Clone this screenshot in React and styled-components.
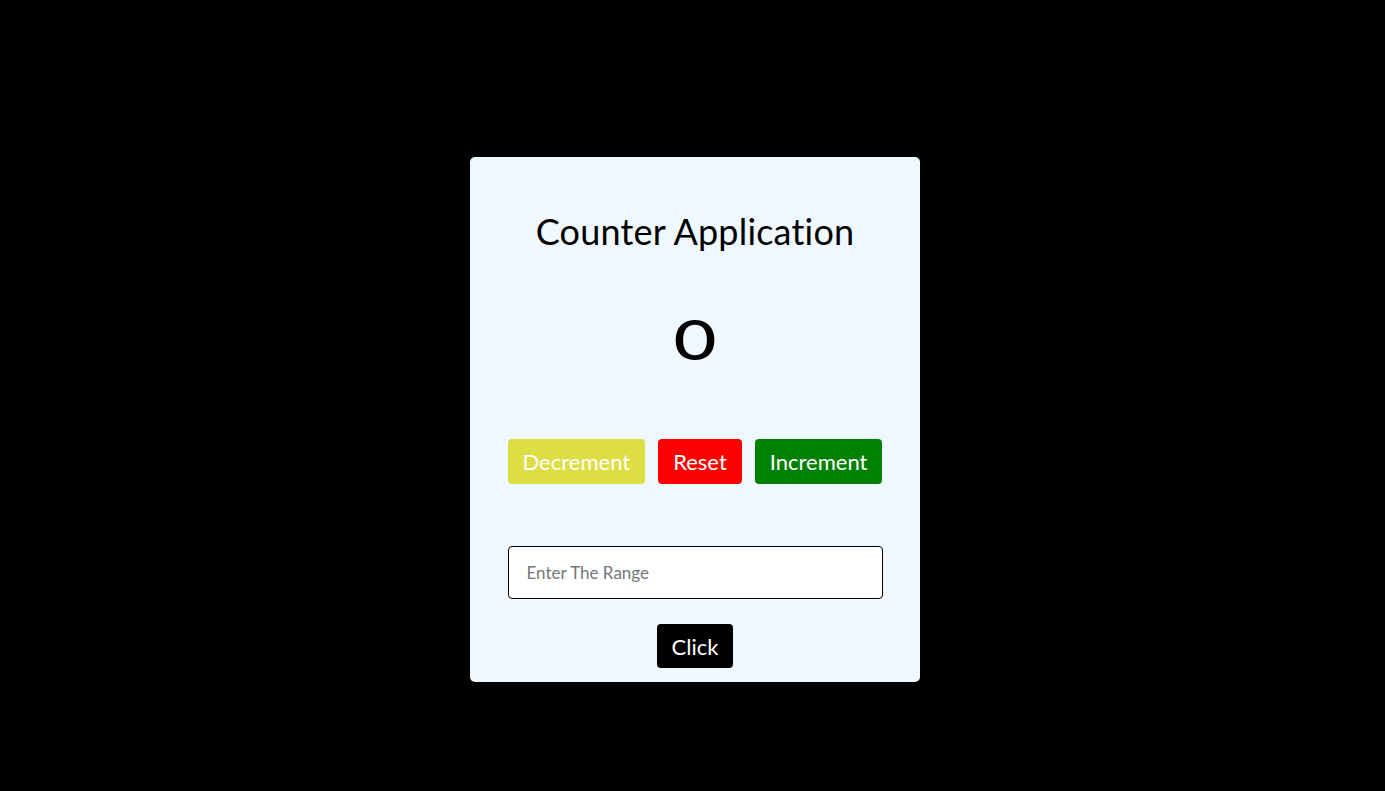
import React, { useState } from 'react';
import styled, { createGlobalStyle } from 'styled-components';

const GlobalStyle = createGlobalStyle`
  html, body {
    margin: 0;
    padding: 0;
    background: #000;
  }
  * {
    box-sizing: border-box;
  }
`;

const Page = styled.div`
  min-height: 100vh;
  background: #000;
  display: flex;
  justify-content: center;
  align-items: flex-start;
  padding: 157px 0 0 5px;
  font-family: Lato, "Open Sans", sans-serif;
`;

const Card = styled.div`
  width: 450px;
  height: 525px;
  background: #f0f8ff;
  border-radius: 5px;
  display: flex;
  flex-direction: column;
  align-items: center;
`;

const Title = styled.h1`
  margin: 50px 0 0;
  height: 48px;
  line-height: 48px;
  font-size: 36px;
  font-weight: 400;
  color: #000;
  letter-spacing: 0.2px;
`;

// the count shows as a round ring in the reference
const Count = styled.div`
  margin-top: 54px;
  height: 60px;
  line-height: 60px;
  font-size: 55px;
  font-weight: 500;
  color: #000;
  transform: scaleX(1.35);
`;

const ButtonRow = styled.div`
  margin-top: 70px;
  display: flex;
  gap: 13px;
`;

const Button = styled.button`
  height: 45px;
  padding: 0 15px;
  border: none;
  border-radius: 4px;
  background: ${p => p.$bg};
  color: #fff;
  font-family: inherit;
  font-size: 22px;
  cursor: pointer;
`;

const RangeInput = styled.input`
  margin-top: 62px;
  width: 375px;
  height: 53px;
  border: 1px solid #000;
  border-radius: 4px;
  background: #fff;
  padding: 0 18px;
  font-family: inherit;
  font-size: 17px;
  outline: none;

  &::placeholder {
    color: #777;
  }
`;

const ClickButton = styled(Button)`
  margin-top: 25px;
  height: 44px;
`;

export default function App() {
  const [count, setCount] = useState(0);
  const [range, setRange] = useState('');

  return (
    <>
      <GlobalStyle />
      <Page>
        <Card>
          <Title>Counter Application</Title>
          <Count>{count}</Count>
          <ButtonRow>
            <Button $bg="#dddd44" onClick={() => setCount(c => c - 1)}>Decrement</Button>
            <Button $bg="#ff0000" onClick={() => setCount(0)}>Reset</Button>
            <Button $bg="#008000" onClick={() => setCount(c => c + 1)}>Increment</Button>
          </ButtonRow>
          <RangeInput
            placeholder="Enter The Range"
            value={range}
            onChange={e => setRange(e.target.value)}
          />
          <ClickButton $bg="#000" onClick={() => setCount(Number(range) || 0)}>Click</ClickButton>
        </Card>
      </Page>
    </>
  );
}
